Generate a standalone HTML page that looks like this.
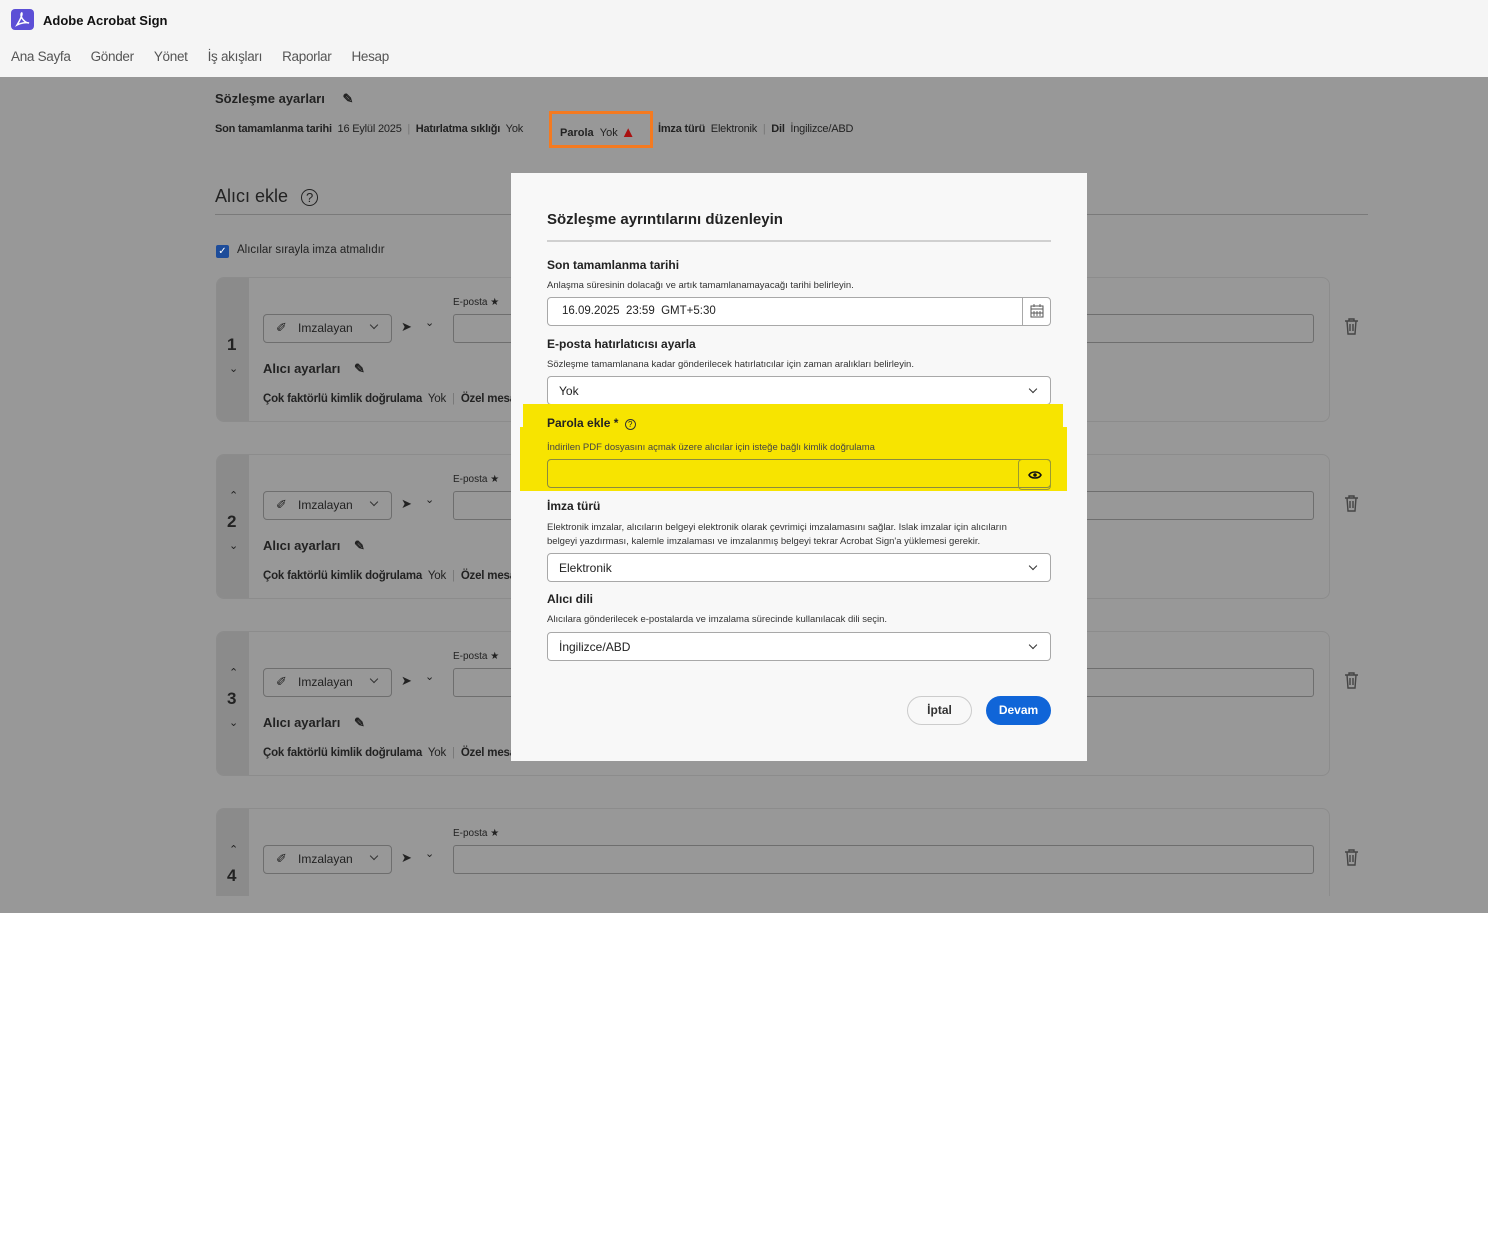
<!DOCTYPE html>
<html><head><meta charset="utf-8"><style>
*{box-sizing:border-box;margin:0;padding:0}
body{width:1488px;height:1243px;position:relative;background:#fff;font-family:"Liberation Sans",sans-serif;color:#222;overflow:hidden}
.a{position:absolute;white-space:nowrap}
.hdr{position:absolute;left:0;top:0;width:1488px;height:77px;background:#f5f5f5}
.gray{position:absolute;left:0;top:77px;width:1488px;height:836px;background:#989898;overflow:hidden}
.b{font-weight:bold}
.card{position:absolute;left:216px;width:1114px;height:145px;border:1px solid #8c8c8c;border-radius:8px;background:#989898;overflow:hidden}
.strip{position:absolute;left:0;top:0;width:32px;height:100%;background:#8b8b8b}
.role{position:absolute;left:46px;top:36px;width:129px;height:29px;border:1px solid #6e6e6e;border-radius:4px}
.inp{position:absolute;left:236px;top:36px;width:861px;height:29px;border:1.5px solid #6e6e6e;border-radius:3px}
.modal{position:absolute;left:511px;top:173px;width:576px;height:588px;background:#f8f8f8}
.field{position:absolute;left:36px;width:504px;height:29px;border:1px solid #a8a8a8;border-radius:4px;background:#fff;font-size:12px;padding:7px 11px}
.lbl{font-size:12px;font-weight:bold;color:#222}
.desc{font-size:9.5px;color:#333}
.chev{position:absolute;right:14px;top:9px;width:6px;height:6px;border-right:1.6px solid #333;border-bottom:1.6px solid #333;transform:rotate(45deg)}
</style></head><body>
<div class="hdr">
 <div class="a" style="left:11px;top:9px;width:23px;height:21px;background:#5c4fd6;border-radius:4px"><svg width="23" height="21" viewBox="0 0 23 21"><path d="M6 16 C9 11 11 7 11 5 C11 3 10 4 10 6 C10 9 14 14 18 14 C15 13 10 14 6 16Z" fill="none" stroke="#fff" stroke-width="1.5"/></svg></div>
 <div class="a b" style="left:43px;top:13px;font-size:13px;color:#111">Adobe Acrobat Sign</div>
 <div class="a" style="left:11px;top:49px;font-size:13.5px;color:#555;letter-spacing:-0.3px"><span>Ana Sayfa</span><span style="margin-left:20px">Gönder</span><span style="margin-left:20px">Yönet</span><span style="margin-left:20px">İş akışları</span><span style="margin-left:20px">Raporlar</span><span style="margin-left:20px">Hesap</span></div>
</div>
<div class="gray">
 <div class="a b" style="left:215px;top:14px;font-size:13px">Sözleşme ayarları <span style="margin-left:14px">✎</span></div>
 <div class="a" style="left:215px;top:46px;font-size:11px;letter-spacing:-0.2px"><b>Son tamamlanma tarihi</b>&nbsp; 16 Eylül 2025 &nbsp;<span style="color:#777">|</span>&nbsp; <b>Hatırlatma sıklığı</b>&nbsp; Yok</div>
 <div class="a" style="left:549px;top:34px;width:104px;height:37px;border:3px solid #f47a20"></div>
 <div class="a" style="left:560px;top:46px;font-size:11px"><b>Parola</b> &nbsp;Yok <span style="color:#a11;font-size:15px;position:relative;top:1px">▲</span></div>
 <div class="a" style="left:658px;top:46px;font-size:11px;letter-spacing:-0.2px"><b>İmza türü</b>&nbsp; Elektronik &nbsp;<span style="color:#777">|</span>&nbsp; <b>Dil</b>&nbsp; İngilizce/ABD</div>
 <div class="a" style="left:215px;top:109px;font-size:18px">Alıcı ekle <span style="font-size:13px;border:1.5px solid #222;border-radius:50%;padding:0 4px;margin-left:8px">?</span></div>
 <div class="a" style="left:215px;top:137px;width:1153px;height:1px;background:#7a7a7a"></div>
 <div class="a" style="left:216px;top:168px;width:13px;height:13px;background:#1d4c9a;border-radius:2px;color:#fff;font-size:10px;text-align:center;line-height:13px">✓</div>
 <div class="a" style="left:237px;top:167px;font-size:11.5px">Alıcılar sırayla imza atmalıdır</div>
</div>
<div class="card" style="top:277px"><div class="strip"></div>
 <div class="a b" style="left:10px;top:57px;font-size:17px">1</div><div class="a" style="left:12px;top:84px;font-size:11px">⌄</div>
 <div class="role"><span class="a" style="left:12px;top:5px;font-size:13px">✐</span><span class="a" style="left:34px;top:6px;font-size:12px">Imzalayan</span><span class="chev" style="top:7px"></span></div>
 <div class="a" style="left:184px;top:41px;font-size:13px">➤</div><div class="a" style="left:208px;top:38px;font-size:11px">⌄</div>
 <div class="a" style="left:236px;top:19px;font-size:10px">E-posta ★</div><div class="inp"></div>
 <div class="a b" style="left:46px;top:83px;font-size:13px">Alıcı ayarları <span style="margin-left:10px">✎</span></div>
 <div class="a" style="left:46px;top:115px;font-size:11.5px;letter-spacing:-0.2px"><b>Çok faktörlü kimlik doğrulama</b>&nbsp; Yok &nbsp;<span style="color:#777">|</span>&nbsp; <b>Özel mesaj</b></div>
</div>
<div class="card" style="top:454px"><div class="strip"></div>
 <div class="a" style="left:12px;top:34px;font-size:11px">⌃</div>
 <div class="a b" style="left:10px;top:57px;font-size:17px">2</div><div class="a" style="left:12px;top:84px;font-size:11px">⌄</div>
 <div class="role"><span class="a" style="left:12px;top:5px;font-size:13px">✐</span><span class="a" style="left:34px;top:6px;font-size:12px">Imzalayan</span><span class="chev" style="top:7px"></span></div>
 <div class="a" style="left:184px;top:41px;font-size:13px">➤</div><div class="a" style="left:208px;top:38px;font-size:11px">⌄</div>
 <div class="a" style="left:236px;top:19px;font-size:10px">E-posta ★</div><div class="inp"></div>
 <div class="a b" style="left:46px;top:83px;font-size:13px">Alıcı ayarları <span style="margin-left:10px">✎</span></div>
 <div class="a" style="left:46px;top:115px;font-size:11.5px;letter-spacing:-0.2px"><b>Çok faktörlü kimlik doğrulama</b>&nbsp; Yok &nbsp;<span style="color:#777">|</span>&nbsp; <b>Özel mesaj</b></div>
</div>
<div class="card" style="top:631px"><div class="strip"></div>
 <div class="a" style="left:12px;top:34px;font-size:11px">⌃</div>
 <div class="a b" style="left:10px;top:57px;font-size:17px">3</div><div class="a" style="left:12px;top:84px;font-size:11px">⌄</div>
 <div class="role"><span class="a" style="left:12px;top:5px;font-size:13px">✐</span><span class="a" style="left:34px;top:6px;font-size:12px">Imzalayan</span><span class="chev" style="top:7px"></span></div>
 <div class="a" style="left:184px;top:41px;font-size:13px">➤</div><div class="a" style="left:208px;top:38px;font-size:11px">⌄</div>
 <div class="a" style="left:236px;top:19px;font-size:10px">E-posta ★</div><div class="inp"></div>
 <div class="a b" style="left:46px;top:83px;font-size:13px">Alıcı ayarları <span style="margin-left:10px">✎</span></div>
 <div class="a" style="left:46px;top:115px;font-size:11.5px;letter-spacing:-0.2px"><b>Çok faktörlü kimlik doğrulama</b>&nbsp; Yok &nbsp;<span style="color:#777">|</span>&nbsp; <b>Özel mesaj</b></div>
</div>
<div class="card" style="top:808px;height:88px;border-bottom:none;border-radius:8px 8px 0 0"><div class="strip"></div>
 <div class="a" style="left:12px;top:34px;font-size:11px">⌃</div>
 <div class="a b" style="left:10px;top:57px;font-size:17px">4</div>
 <div class="role"><span class="a" style="left:12px;top:5px;font-size:13px">✐</span><span class="a" style="left:34px;top:6px;font-size:12px">Imzalayan</span><span class="chev" style="top:7px"></span></div>
 <div class="a" style="left:184px;top:41px;font-size:13px">➤</div><div class="a" style="left:208px;top:38px;font-size:11px">⌄</div>
 <div class="a" style="left:236px;top:19px;font-size:10px">E-posta ★</div><div class="inp"></div>
</div>
<div class="a" style="left:0;top:896px;width:1488px;height:17px;background:#989898"></div>
<svg class="a" style="left:1344px;top:318px" width="15" height="17" viewBox="0 0 15 17"><path d="M1 3h13M5 3V1h5v2M3 3l1 13h7l1-13M6 6v7M9 6v7" fill="none" stroke="#444" stroke-width="1.4"/></svg>
<svg class="a" style="left:1344px;top:495px" width="15" height="17" viewBox="0 0 15 17"><path d="M1 3h13M5 3V1h5v2M3 3l1 13h7l1-13M6 6v7M9 6v7" fill="none" stroke="#444" stroke-width="1.4"/></svg>
<svg class="a" style="left:1344px;top:672px" width="15" height="17" viewBox="0 0 15 17"><path d="M1 3h13M5 3V1h5v2M3 3l1 13h7l1-13M6 6v7M9 6v7" fill="none" stroke="#444" stroke-width="1.4"/></svg>
<svg class="a" style="left:1344px;top:849px" width="15" height="17" viewBox="0 0 15 17"><path d="M1 3h13M5 3V1h5v2M3 3l1 13h7l1-13M6 6v7M9 6v7" fill="none" stroke="#444" stroke-width="1.4"/></svg>

<div class="modal">
 <div class="a b" style="left:36px;top:38px;font-size:15px;color:#222">Sözleşme ayrıntılarını düzenleyin</div>
 <div class="a" style="left:36px;top:67px;width:504px;height:2px;background:#d0d0d0"></div>
 <div class="a lbl" style="left:36px;top:85px">Son tamamlanma tarihi</div>
 <div class="a desc" style="left:36px;top:107px">Anlaşma süresinin dolacağı ve artık tamamlanamayacağı tarihi belirleyin.</div>
 <div class="field" style="top:124px;padding-left:14px;font-size:11.5px">16.09.2025&nbsp; 23:59&nbsp; GMT+5:30<div class="a" style="right:0;top:0;width:28px;height:27px;border-left:1px solid #a8a8a8"><svg style="position:absolute;left:7px;top:6px" width="14" height="14" viewBox="0 0 14 14"><rect x="1" y="2" width="12" height="11" fill="none" stroke="#555"/><path d="M1 5h12M4 7v5M7 7v5M10 7v5M1 9h12M4 0v3M10 0v3" stroke="#555" stroke-width="0.9"/></svg></div></div>
 <div class="a lbl" style="left:36px;top:164px">E-posta hatırlatıcısı ayarla</div>
 <div class="a desc" style="left:36px;top:186px">Sözleşme tamamlanana kadar gönderilecek hatırlatıcılar için zaman aralıkları belirleyin.</div>
 <div class="field" style="top:203px">Yok<span class="chev"></span></div>
 <div class="a" style="left:12px;top:231px;width:540px;height:24px;background:#f7e400"></div>
 <div class="a" style="left:9px;top:254px;width:547px;height:64px;background:#f7e400"></div>
 <div class="a lbl" style="left:36px;top:243px">Parola ekle * <span style="display:inline-block;width:11px;height:11px;border:1px solid #333;border-radius:50%;font-size:8px;text-align:center;line-height:10px;font-weight:normal;margin-left:3px">?</span></div>
 <div class="a desc" style="left:36px;top:269px;color:#444">İndirilen PDF dosyasını açmak üzere alıcılar için isteğe bağlı kimlik doğrulama</div>
 <div class="a" style="left:36px;top:286px;width:504px;height:29px;border:1px solid #8a8a40;border-radius:4px"></div>
 <div class="a" style="left:507px;top:286px;width:33px;height:31px;border:1px solid #9a9a30;border-radius:4px"><svg style="position:absolute;left:9px;top:10px" width="14" height="10" viewBox="0 0 14 10"><path d="M1 5C3 1 11 1 13 5C11 9 3 9 1 5Z" fill="none" stroke="#111" stroke-width="1.6"/><circle cx="7" cy="5" r="1.8" fill="#111"/></svg></div>
 <div class="a lbl" style="left:36px;top:326px">İmza türü</div>
 <div class="a desc" style="left:36px;top:348px;line-height:14px">Elektronik imzalar, alıcıların belgeyi elektronik olarak çevrimiçi imzalamasını sağlar. Islak imzalar için alıcıların<br>belgeyi yazdırması, kalemle imzalaması ve imzalanmış belgeyi tekrar Acrobat Sign'a yüklemesi gerekir.</div>
 <div class="field" style="top:380px">Elektronik<span class="chev"></span></div>
 <div class="a lbl" style="left:36px;top:419px">Alıcı dili</div>
 <div class="a desc" style="left:36px;top:441px">Alıcılara gönderilecek e-postalarda ve imzalama sürecinde kullanılacak dili seçin.</div>
 <div class="field" style="top:459px">İngilizce/ABD<span class="chev"></span></div>
 <div class="a" style="left:396px;top:523px;width:65px;height:29px;border:1px solid #ccc;border-radius:15px;background:#f8f8f8;font-size:12px;font-weight:bold;text-align:center;line-height:27px;color:#333">İptal</div>
 <div class="a" style="left:475px;top:523px;width:65px;height:29px;border-radius:15px;background:#1065d8;font-size:12px;font-weight:bold;text-align:center;line-height:29px;color:#fff">Devam</div>
</div>
</body></html>
